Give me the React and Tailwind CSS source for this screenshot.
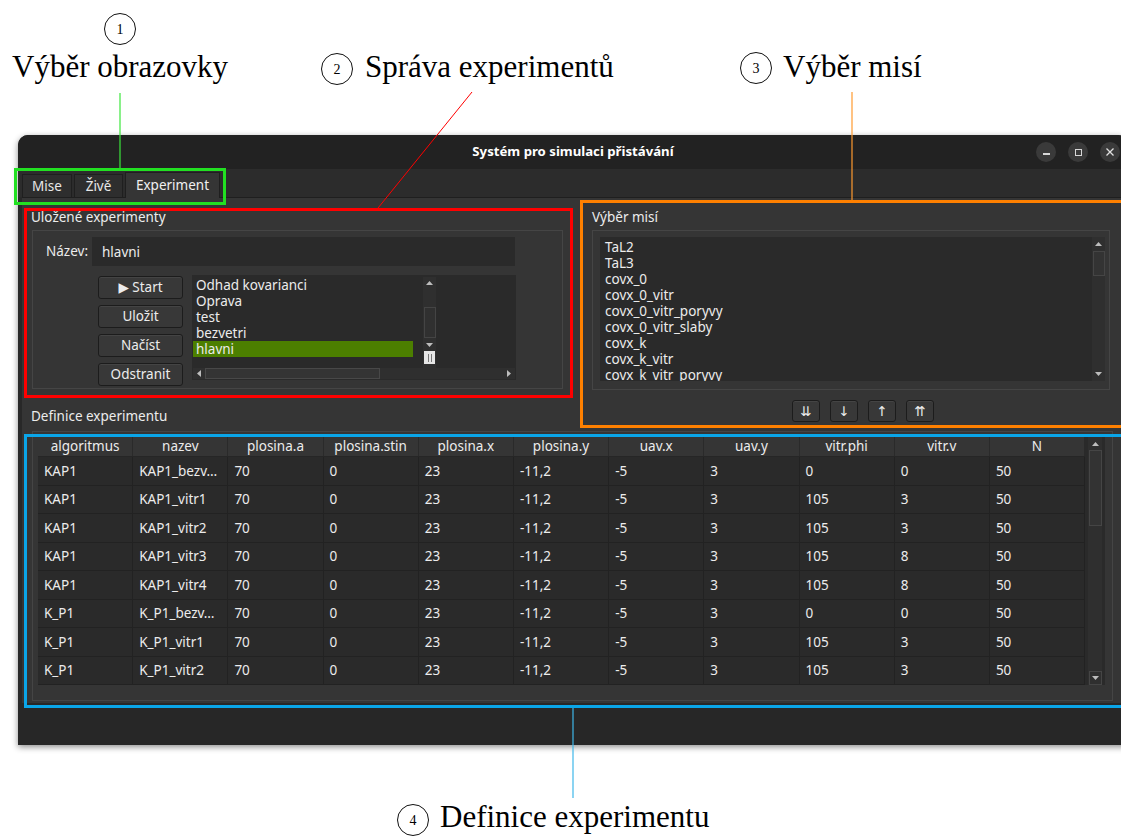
import React from 'react';

const columns = ['algoritmus', 'nazev', 'plosina.a', 'plosina.stin', 'plosina.x', 'plosina.y', 'uav.x', 'uav.y', 'vitr.phi', 'vitr.v', 'N'];

const rows = [
  ['KAP1', 'KAP1_bezv…', '70', '0', '23', '-11,2', '-5', '3', '0', '0', '50'],
  ['KAP1', 'KAP1_vitr1', '70', '0', '23', '-11,2', '-5', '3', '105', '3', '50'],
  ['KAP1', 'KAP1_vitr2', '70', '0', '23', '-11,2', '-5', '3', '105', '3', '50'],
  ['KAP1', 'KAP1_vitr3', '70', '0', '23', '-11,2', '-5', '3', '105', '8', '50'],
  ['KAP1', 'KAP1_vitr4', '70', '0', '23', '-11,2', '-5', '3', '105', '8', '50'],
  ['K_P1', 'K_P1_bezv…', '70', '0', '23', '-11,2', '-5', '3', '0', '0', '50'],
  ['K_P1', 'K_P1_vitr1', '70', '0', '23', '-11,2', '-5', '3', '105', '3', '50'],
  ['K_P1', 'K_P1_vitr2', '70', '0', '23', '-11,2', '-5', '3', '105', '3', '50'],
];

const savedExperiments = ['Odhad kovarianci', 'Oprava', 'test', 'bezvetri', 'hlavni'];

const missions = ['TaL2', 'TaL3', 'covx_0', 'covx_0_vitr', 'covx_0_vitr_poryvy', 'covx_0_vitr_slaby', 'covx_k', 'covx_k_vitr', 'covx_k_vitr_poryvy'];

// tiny scrollbar arrow
const Arrow = ({ dir }) => {
  const d = {
    up: 'M0 5 L3.5 1 L7 5 Z',
    down: 'M0 1 L3.5 5 L7 1 Z',
    left: 'M5 0 L1 3.5 L5 7 Z',
    right: 'M1 0 L5 3.5 L1 7 Z',
  }[dir];
  const vertical = dir === 'up' || dir === 'down';
  return (
    <svg width={vertical ? 7 : 6} height={vertical ? 6 : 7} viewBox={vertical ? '0 0 7 6' : '0 0 6 7'}>
      <path d={d} fill="#bdbdbd" />
    </svg>
  );
};

const QtButton = ({ children, className = '' }) => (
  <div className={`flex items-center justify-center rounded-[3px] border border-[#1c1c1c] bg-[#383838] text-[13.5px] text-[#ececec] shadow-[inset_0_1px_0_#444] ${className}`}>
    {children}
  </div>
);

const TitleBar = () => (
  <div className="flex h-[34px] shrink-0 items-center rounded-t-[10px] bg-[#222222]">
    <div className="w-[92px]" />
    <div className="flex-1 text-center text-[13.2px] font-bold text-white">Systém pro simulaci přistávání</div>
    <div className="flex w-[92px] items-center gap-[12px]">
      <div className="flex h-[20px] w-[20px] items-center justify-center rounded-full bg-[#3a3a3a]">
        <div className="mt-[4px] h-[1.5px] w-[7px] bg-[#d8d8d8]" />
      </div>
      <div className="flex h-[20px] w-[20px] items-center justify-center rounded-full bg-[#3a3a3a]">
        <div className="h-[7px] w-[7px] border border-[#d8d8d8]" />
      </div>
      <div className="flex h-[20px] w-[20px] items-center justify-center rounded-full bg-[#3a3a3a]">
        <svg width="8" height="8" viewBox="0 0 8 8">
          <path d="M0.5 0.5 L7.5 7.5 M7.5 0.5 L0.5 7.5" stroke="#e0e0e0" strokeWidth="1.3" />
        </svg>
      </div>
    </div>
  </div>
);

const Tabs = () => (
  <div className="flex h-[28px] shrink-0 items-end gap-[2px] pl-[4px]">
    <div className="flex h-[23px] w-[50px] items-center justify-center border border-b-0 border-[#1f1f1f] bg-[#2e2e2e] text-[13.5px] text-[#e8e8e8]">Mise</div>
    <div className="flex h-[23px] w-[49px] items-center justify-center border border-b-0 border-[#1f1f1f] bg-[#2e2e2e] text-[13.5px] text-[#e8e8e8]">Živě</div>
    <div className="relative z-10 -mb-[1px] flex h-[26px] w-[95px] items-center justify-center border border-b-0 border-[#1f1f1f] bg-[#353535] text-[13.5px] text-[#f0f0f0]">Experiment</div>
  </div>
);

const SavedExperiments = () => (
  <div className="h-[159px] w-[531px] border border-[#454545] bg-[#353535] pl-[13px] pt-[6px]">
    <div className="flex h-[29px] items-center">
      <div className="w-[46px] text-[13.5px] text-[#ececec]">Název:</div>
      <div className="h-[29px] w-[423px] bg-[#2a2a2a] pl-[10px] pt-[5px] text-[13.5px] text-[#ececec]">hlavni</div>
    </div>
    <div className="mt-[9px] flex">
      <div className="ml-[52px] flex w-[85px] flex-col gap-[6px] pt-[1px]">
        <QtButton className="h-[23px]">▶ Start</QtButton>
        <QtButton className="h-[23px]">Uložit</QtButton>
        <QtButton className="h-[23px]">Načíst</QtButton>
        <QtButton className="h-[23px]">Odstranit</QtButton>
      </div>
      <div className="ml-[9px] flex h-[105px] w-[324px] flex-col bg-[#2a2a2a]">
        <div className="flex h-[93px]">
          <div className="w-[231px] pl-[1px] pt-[2px]">
            {savedExperiments.map((name) => (
              <div
                key={name}
                className={`h-[16px] w-[220px] pl-[3px] text-[13.5px] leading-[16px] text-[#ececec] ${name === 'hlavni' ? 'bg-[#4c7f00]' : ''}`}
              >
                {name}
              </div>
            ))}
          </div>
          <div className="mt-[2px] flex h-[91px] w-[13px] flex-col items-center bg-[#2f2f2f]">
            <div className="flex h-[11px] items-center"><Arrow dir="up" /></div>
            <div className="h-[19px]" />
            <div className="h-[31px] w-[12px] border border-[#444] bg-[#303030]" />
            <div className="flex h-[13px] items-center"><Arrow dir="down" /></div>
            <div className="flex h-[13px] w-[11px] items-center justify-center gap-[2px] bg-[#e6e6e6]">
              <div className="h-[8px] w-[1px] bg-[#777]" />
              <div className="h-[8px] w-[1px] bg-[#777]" />
            </div>
          </div>
        </div>
        <div className="ml-[1px] flex h-[11px] w-[322px] items-center bg-[#2f2f2f]">
          <div className="flex w-[12px] justify-center"><Arrow dir="left" /></div>
          <div className="h-[11px] w-[175px] border border-[#484848] bg-[#343434]" />
          <div className="flex-1" />
          <div className="flex w-[12px] justify-center"><Arrow dir="right" /></div>
        </div>
      </div>
    </div>
  </div>
);

const MissionPicker = () => (
  <>
    <div className="h-[160px] w-[518px] border border-[#454545] bg-[#353535] pl-[7px] pt-[6px]">
      <div className="flex h-[144px] w-[505px] bg-[#2a2a2a]">
        <div className="flex-1 overflow-hidden pl-[5px] pt-[2px]">
          {missions.map((m) => (
            <div key={m} className="h-[16px] text-[13.5px] leading-[16px] text-[#ececec]">{m}</div>
          ))}
        </div>
        <div className="flex w-[13px] flex-col items-center bg-[#2f2f2f]">
          <div className="flex h-[14px] items-center"><Arrow dir="up" /></div>
          <div className="h-[25px] w-[12px] border border-[#454545] bg-[#333]" />
          <div className="flex-1" />
          <div className="flex h-[14px] items-center"><Arrow dir="down" /></div>
        </div>
      </div>
    </div>
    <div className="mt-[10px] flex gap-[10px] pl-[200px] font-['DejaVu_Sans',sans-serif]">
      <QtButton className="h-[22px] w-[28px] text-[12px]">⇊</QtButton>
      <QtButton className="h-[22px] w-[28px] text-[12px]">↓</QtButton>
      <QtButton className="h-[22px] w-[28px] text-[12px]">↑</QtButton>
      <QtButton className="h-[22px] w-[28px] text-[12px]">⇈</QtButton>
    </div>
  </>
);

const ExperimentTable = () => (
  <div className="h-[270px] w-[1081px] border border-[#454545] bg-[#353535] p-[5px]">
    <div className="flex h-[248px] w-[1067px] bg-[#2a2a2a]">
      <div className="w-[1047px]">
        <div className="flex h-[20px] border-b border-[#262626] bg-[#353535]">
          {columns.map((c) => (
            <div key={c} className="flex w-[95.2px] items-center justify-center border-r border-[#2a2a2a] text-[13.5px] text-[#ececec]">
              {c}
            </div>
          ))}
        </div>
        {rows.map((r, i) => (
          <div key={i} className="flex h-[28.5px] border-b border-[#222222]">
            {r.map((v, j) => (
              <div key={j} className="flex w-[95.2px] items-center border-r border-[#222222] pl-[6px] text-[13.5px] text-[#ececec]">
                {v}
              </div>
            ))}
          </div>
        ))}
      </div>
      <div className="w-[3px]" />
      <div className="flex h-[248px] w-[14px] flex-col items-center bg-[#2f2f2f]">
        <div className="flex h-[13px] items-center"><Arrow dir="up" /></div>
        <div className="h-[76px] w-[13px] border border-[#454545] bg-[#333]" />
        <div className="flex-1" />
        <div className="flex h-[14px] w-[13px] items-center justify-center border border-[#454545]"><Arrow dir="down" /></div>
      </div>
    </div>
  </div>
);

const Circled = ({ n, x, y }) => (
  <div
    className="absolute flex h-[32px] w-[32px] items-center justify-center rounded-full border border-[#111] bg-white text-[14px] text-black"
    style={{ left: x - 16, top: y - 16 }}
  >
    {n}
  </div>
);

export default function App() {
  return (
    <div className="relative h-[836px] w-[1121px] overflow-hidden bg-white font-['Noto_Sans','DejaVu_Sans',sans-serif]">
      {/* application window */}
      <div className="ml-[18px] mt-[135px] flex h-[610px] w-[1110px] flex-col rounded-t-[10px] bg-[#282828] shadow-[0_2px_6px_rgba(0,0,0,0.45)]">
        <TitleBar />
        <div className="bg-[#2c2c2c]">
          <Tabs />
        </div>
        <div className="ml-[4px] h-[506px] border-t border-[#1f1f1f] bg-[#353535] px-[10px] pt-[11px]">
          <div className="flex">
            <div className="w-[531px]">
              <div className="-ml-[1px] h-[16px] text-[13.5px] leading-[16px] text-[#ececec]">Uložené experimenty</div>
              <div className="mt-[5px]">
                <SavedExperiments />
              </div>
              <div className="-ml-[1px] mb-[7px] mt-[19px] h-[16px] text-[13.5px] leading-[16px] text-[#ececec]">Definice experimentu</div>
            </div>
            <div className="ml-[29px] w-[518px]">
              <div className="h-[16px] text-[13.5px] leading-[16px] text-[#ececec]">Výběr misí</div>
              <div className="mt-[5px]">
                <MissionPicker />
              </div>
            </div>
          </div>
          <ExperimentTable />
        </div>
        <div className="flex-1 bg-[#272727]" />
      </div>

      {/* callout boxes */}
      <div className="absolute left-[14px] top-[168px] h-[37px] w-[212px] border-[3px] border-[#22e022]" />
      <div className="absolute left-[24px] top-[208px] h-[190px] w-[549px] border-[3px] border-[#ff0000]" />
      <div className="absolute left-[580px] top-[200px] h-[228px] w-[560px] border-[3px] border-[#ff8000]" />
      <div className="absolute left-[24px] top-[434px] h-[274px] w-[1110px] border-[3px] border-[#0aa5e8]" />

      {/* leader lines */}
      <svg className="pointer-events-none absolute left-0 top-0" width="1121" height="836">
        <line x1="120" y1="93" x2="120" y2="168" stroke="#3ce63c" strokeWidth="1.2" />
        <line x1="472" y1="92" x2="378" y2="208" stroke="#ff0000" strokeWidth="1" />
        <line x1="852" y1="92" x2="852" y2="200" stroke="#ff9a30" strokeWidth="1.2" />
        <line x1="573" y1="708" x2="573" y2="798" stroke="#3fb8ea" strokeWidth="1.2" />
      </svg>

      {/* callout labels */}
      <div className="font-['Liberation_Serif','DejaVu_Serif',serif]">
        <Circled n="1" x={120} y={29} />
        <div className="absolute left-[12px] top-[52px] text-[31px] leading-[30px] text-black">Výběr obrazovky</div>
        <Circled n="2" x={337} y={69} />
        <div className="absolute left-[365px] top-[52px] text-[31px] leading-[30px] text-black">Správa experimentů</div>
        <Circled n="3" x={756} y={68} />
        <div className="absolute left-[783px] top-[52px] text-[31px] leading-[30px] text-black">Výběr misí</div>
        <Circled n="4" x={413} y={820} />
        <div className="absolute left-[440px] top-[802px] text-[31px] leading-[30px] text-black">Definice experimentu</div>
      </div>
    </div>
  );
}
